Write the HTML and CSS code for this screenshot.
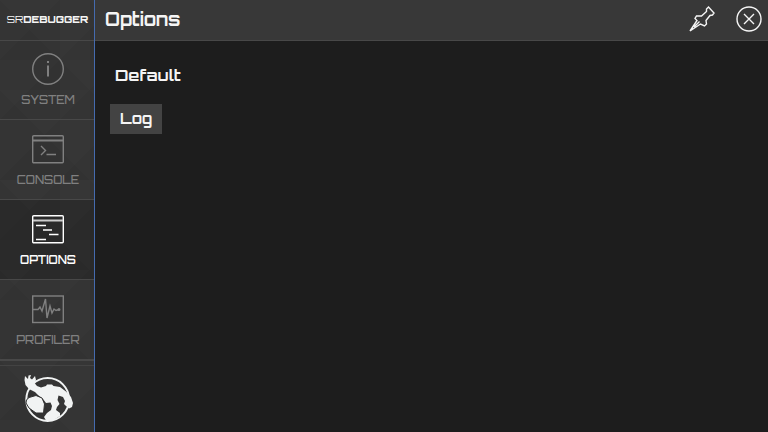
FILE: index.html
```html
<!DOCTYPE html>
<html lang="en">
<head>
    <meta charset="utf-8">
    <title>SRDebugger</title>
    <meta name="viewport" content="width=device-width, initial-scale=1">
    <link rel="stylesheet" href="styles.css">
</head>
<body>
    <aside class="sidebar">
        <div class="brand">SR<b>DEBUGGER</b></div>
        <nav class="tabs">
            <button type="button" class="tab">
                <svg class="icon" viewBox="0 0 32 32">
                    <circle cx="16" cy="16" r="15.3"/>
                    <path d="M16 12.5v11M16 8v2" stroke-width="2"/>
                </svg>
                <span>SYSTEM</span>
            </button>
            <button type="button" class="tab">
                <svg class="icon" viewBox="0 0 32 32">
                    <rect x="0.7" y="2.7" width="30.6" height="27" rx="1"/>
                    <path d="M1 7.5h30" stroke-width="2"/>
                    <path d="M9 13l4.5 4.5L9 22M14.5 21.5h9.5"/>
                </svg>
                <span>CONSOLE</span>
            </button>
            <button type="button" class="tab active">
                <svg class="icon" viewBox="0 0 32 32">
                    <rect x="0.7" y="2.7" width="30.6" height="27" rx="1"/>
                    <path d="M1 7.5h30" stroke="#ccc" stroke-width="2"/>
                    <path d="M4 12.5h10M11 17h9M17 21.5h9.5M4 26.5h10"/>
                </svg>
                <span>OPTIONS</span>
            </button>
            <button type="button" class="tab">
                <svg class="icon" viewBox="0 0 32 32">
                    <rect x="0.7" y="3" width="30.6" height="26.5"/>
                    <path d="M1 16.5h5l2-2.500 2 4 3.500-12L15 25l3-12 2 7 2-4 2 1.500 3-1"/>
                    <circle cx="27" cy="16.5" r="0.8"/>
                </svg>
                <span>PROFILER</span>
            </button>
        </nav>
        <div class="badge">
            <svg class="mascot" viewBox="0 0 50 50">
                <circle class="ring" cx="24.7" cy="25.5" r="21.4"/>
                <path d="M2 2L5 5 5.500 1.500 8 1 7 4 9 5.500 12 2 13 6 11.500 9 14 12 18 13.500 23 12 24 10.500 29 10.500 30.500 12 37 13 43 17.500 48 23 50 29 49 33 46 34.500 43 32 41 30 42 27 40 23 35.500 21.500 34.500 26 36.500 30 34 33 33 36 37 39 37 42 31 46 23 46.500 21 43 24 39 28 36 29 32 27.500 28.500 23 29 20 25 15 21 12 18 6 15 2.500 11 1.500 6z"/>
                <path class="shield" d="M3.500 26L6 23.500 13 21.500 19 24 21.500 30 20.500 39 13 39 6 34 3 29z"/>
            </svg>
        </div>
    </aside>
    <main class="content">
        <header class="header">
            <h1>Options</h1>
            <div class="actions">
                <button type="button" class="icon-button" aria-label="Pin">
                    <svg viewBox="0 0 26 26"><path d="M1 25L8 14.500 6 12.500 7.500 10 12.500 10 17.500 5.500 17.500 3 19.500 1 25 7 23.500 9 21 9.500 17 14.500 17.500 18 15.500 20 11.500 18zM10.500 15.500L5 21"/></svg>
                </button>
                <button type="button" class="icon-button" aria-label="Close">
                    <svg viewBox="0 0 26 26"><circle cx="13" cy="13" r="12"/><path d="M8 8l10 10M18 8L8 18"/></svg>
                </button>
            </div>
        </header>
        <section class="options">
            <h2>Default</h2>
            <button type="button" class="option">Log</button>
        </section>
    </main>
</body>
</html>
```

FILE: styles.css
```css
* {
    box-sizing: border-box;
}
body {
    display: flex;
    min-height: 100vh;
    margin: 0;
    background-color: #1d1d1d;
    color: #f5f5f5;
    font-family: Orbitron, "DejaVu Sans", sans-serif;
}
button {
    border: none;
    font-family: inherit;
    color: inherit;
    cursor: pointer;
}
svg {
    fill: none;
    stroke: currentColor;
}
.sidebar {
    display: flex;
    flex-direction: column;
    width: 95px;
    border-right: 1px solid #456baf;
    background-color: #343434;
    background-image:
        linear-gradient(135deg, rgba(255, 255, 255, 0.01) 50%, transparent 50%),
        linear-gradient(45deg, rgba(0, 0, 0, 0.04) 50%, transparent 50%);
    background-size: 60px 60px, 90px 90px;
}
.brand {
    display: flex;
    align-items: center;
    justify-content: center;
    height: 40px;
    padding: 0 0 2px 1px;
    font-size: 10px;
}
.brand b {
    font-weight: 800;
}
.tab {
    display: flex;
    flex-direction: column;
    align-items: center;
    gap: 7px;
    width: 100%;
    height: 80px;
    padding: 13px 0 0 2px;
    border-bottom: 1px solid #484848;
    background: none;
    color: #808080;
    font-size: 11px;
    font-weight: 500;
    line-height: 16px;
}
.tab:first-child {
    padding-top: 12px;
    border-top: 1px solid #484848;
}
.tab:last-child {
    height: 81px;
    border-bottom-width: 2px;
}
.tab.active {
    background-color: rgba(0, 0, 0, 0.18);
    color: #fff;
    font-weight: 600;
}
.icon {
    width: 32px;
    height: 32px;
    stroke-width: 1.4;
}
.badge {
    display: flex;
    flex: 1;
    align-items: center;
    justify-content: center;
    margin-top: 4px;
    padding-left: 2px;
    border-top: 1px solid #434343;
}
.mascot {
    width: 50px;
    height: 50px;
    fill: #f1f3f3;
    stroke: none;
}
.ring {
    fill: none;
    stroke: #f1f3f3;
    stroke-width: 2;
}
.shield {
    stroke: #333;
}
.content {
    flex: 1;
}
.header {
    display: flex;
    align-items: center;
    justify-content: space-between;
    height: 41px;
    padding: 0 6px 2px 10px;
    border-bottom: 1px solid #484848;
    background-color: #383838;
}
h1 {
    margin: 0;
    font-size: 18px;
    line-height: 22px;
}
.actions {
    display: flex;
    gap: 21px;
}
.icon-button {
    width: 26px;
    height: 26px;
    padding: 0;
    background: none;
}
.icon-button svg {
    display: block;
    stroke-width: 1.4;
}
.options {
    padding: 24px 15px;
}
h2 {
    margin: 0 0 19px 5px;
    font-size: 16px;
    line-height: 20px;
}
.option {
    height: 30px;
    padding: 0 10px 2px;
    background-color: #434343;
    font-size: 15px;
    font-weight: bold;
}
```
